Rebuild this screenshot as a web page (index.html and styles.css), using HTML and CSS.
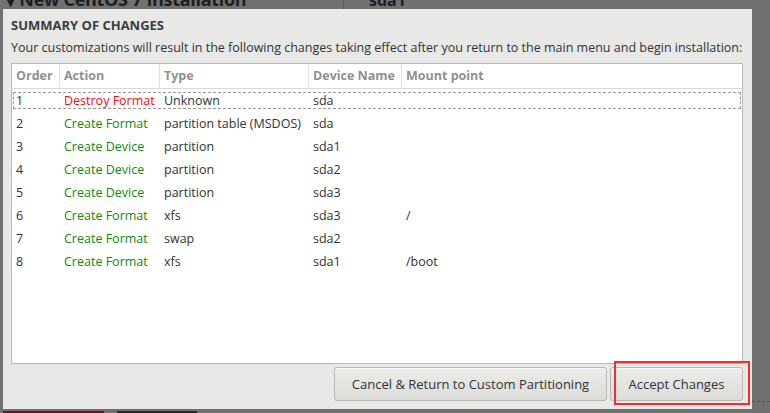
FILE: index.html
```html
<!DOCTYPE html>
<html>
<head>
<meta charset="utf-8">
<link rel="stylesheet" href="styles.css">
</head>
<body>
<div class="screen">
  <div class="topbar">
    <div class="top-left"><span class="arrow">▼</span> New CentOS 7 Installation</div>
    <div class="top-right">sda1</div>
  </div>
  <div class="middle">
    <div class="dialog">
      <div class="title">SUMMARY OF CHANGES</div>
      <div class="desc">Your customizations will result in the following changes taking effect after you return to the main menu and begin installation:</div>
      <div class="table">
        <div class="row head">
          <div class="c c1">Order</div>
          <div class="c c2">Action</div>
          <div class="c c3">Type</div>
          <div class="c c4">Device Name</div>
          <div class="c c5">Mount point</div>
        </div>
        <div class="rows">
          <div class="row focus"><div class="c c1">1</div><div class="c c2 red">Destroy Format</div><div class="c c3">Unknown</div><div class="c c4">sda</div><div class="c c5"></div></div>
          <div class="row"><div class="c c1">2</div><div class="c c2 green">Create Format</div><div class="c c3">partition table (MSDOS)</div><div class="c c4">sda</div><div class="c c5"></div></div>
          <div class="row"><div class="c c1">3</div><div class="c c2 green">Create Device</div><div class="c c3">partition</div><div class="c c4">sda1</div><div class="c c5"></div></div>
          <div class="row"><div class="c c1">4</div><div class="c c2 green">Create Device</div><div class="c c3">partition</div><div class="c c4">sda2</div><div class="c c5"></div></div>
          <div class="row"><div class="c c1">5</div><div class="c c2 green">Create Device</div><div class="c c3">partition</div><div class="c c4">sda3</div><div class="c c5"></div></div>
          <div class="row"><div class="c c1">6</div><div class="c c2 green">Create Format</div><div class="c c3">xfs</div><div class="c c4">sda3</div><div class="c c5">/</div></div>
          <div class="row"><div class="c c1">7</div><div class="c c2 green">Create Format</div><div class="c c3">swap</div><div class="c c4">sda2</div><div class="c c5"></div></div>
          <div class="row"><div class="c c1">8</div><div class="c c2 green">Create Format</div><div class="c c3">xfs</div><div class="c c4">sda1</div><div class="c c5">/boot</div></div>
        </div>
      </div>
      <div class="buttons">
        <button class="btn cancel">Cancel &amp; Return to Custom Partitioning</button>
        <div class="accept-wrap">
          <button class="btn accept">Accept Changes</button>
          <div class="highlight"></div>
        </div>
      </div>
    </div>
    <div class="side"><div class="dash"></div></div>
  </div>
  <div class="bottombar">
    <div class="tab maroon"></div>
    <div class="tab dark"></div>
  </div>
</div>
</body>
</html>
```
FILE: styles.css
```css
html, body {
  margin: 0;
  padding: 0;
}
body {
  background: #717171;
  font-family: "Open Sans", "DejaVu Sans", sans-serif;
  color: #2e3436;
}
.screen {
  width: 770px;
  height: 413px;
  overflow: hidden;
  display: flex;
  flex-direction: column;
}
.topbar {
  height: 9px;
  overflow: hidden;
  display: flex;
  flex-shrink: 0;
}
.top-left {
  width: 337px;
  padding-left: 6px;
  margin-top: -11px;
  font-size: 18px;
  font-weight: bold;
  line-height: 20px;
  color: #1e1e1e;
  border-right: 1px solid #5c5c5c;
  white-space: nowrap;
  letter-spacing: -0.3px;
}
.arrow {
  font-size: 12px;
}
.top-right {
  padding-left: 25px;
  margin-top: -9px;
  font-size: 16px;
  font-weight: bold;
  line-height: 18px;
  color: #1e1e1e;
}
.middle {
  display: flex;
  height: 400px;
  flex-shrink: 0;
}
.dialog {
  margin-left: 3px;
  width: 749px;
  height: 400px;
  background: #e8e8e7;
  box-sizing: border-box;
  padding: 0 0 0 8px;
  display: flex;
  flex-direction: column;
}
.title {
  margin-top: 8px;
  font-weight: bold;
  font-size: 13px;
  line-height: 16px;
  color: #3a3d3e;
}
.desc {
  margin-top: 6px;
  font-size: 12.5px;
  line-height: 18px;
  white-space: nowrap;
  color: #2e3436;
}
.table {
  margin-top: 6px;
  width: 732px;
  height: 301px;
  box-sizing: border-box;
  background: #fff;
  border: 1px solid #b9bab6;
  display: flex;
  flex-direction: column;
}
.row {
  display: flex;
  height: 23px;
  align-items: center;
  font-size: 12.5px;
  white-space: nowrap;
}
.row.head {
  height: 24px;
  border-bottom: 1px solid #dadad8;
  color: #8f918d;
  font-weight: bold;
}
.row.head .c {
  height: 24px;
  line-height: 24px;
  border-right: 1px solid #e2e2e0;
}
.row.head .c5 {
  border-right: none;
}
.rows {
  padding: 2px 0 0 0;
}
.row.focus {
  outline: 1px dashed #9a9a9a;
  outline-offset: -2px;
  height: 19px;
  margin-bottom: 2px;
}
.c {
  box-sizing: border-box;
  padding-left: 4px;
  overflow: hidden;
}
.c1 { width: 48px; }
.c2 { width: 100px; }
.c3 { width: 149px; }
.c4 { width: 93px; }
.c5 { flex: 1; }
.red { color: #f01010; }
.green { color: #0f8a0f; }
.buttons {
  display: flex;
  justify-content: flex-end;
  gap: 3px;
  margin-top: 3px;
  padding-right: 9px;
}
.btn {
  font-family: "Open Sans", "DejaVu Sans", sans-serif;
  font-size: 13px;
  color: #2e3436;
  height: 34px;
  border: 1px solid #b8b8b4;
  border-radius: 3px;
  background: linear-gradient(#ecece9, #dcdcd9);
  box-shadow: inset 0 1px 0 #f7f7f6;
  padding: 0;
}
.cancel {
  width: 273px;
}
.accept-wrap {
  position: relative;
}
.accept {
  width: 133px;
}
.highlight {
  position: absolute;
  left: 4px;
  top: -6px;
  width: 136px;
  height: 44px;
  box-sizing: border-box;
  border: 2px solid #ef3030;
}
.side {
  flex: 1;
  display: flex;
  flex-direction: column;
  justify-content: flex-end;
}
.dash {
  border-top: 1px dashed #555;
  margin-bottom: 7px;
}
.bottombar {
  display: flex;
  margin-top: 2px;
  padding-left: 3px;
  gap: 13px;
}
.tab {
  height: 4px;
}
.maroon {
  width: 101px;
  background: #6e1030;
}
.dark {
  width: 80px;
  background: #2a2a2a;
}
```
